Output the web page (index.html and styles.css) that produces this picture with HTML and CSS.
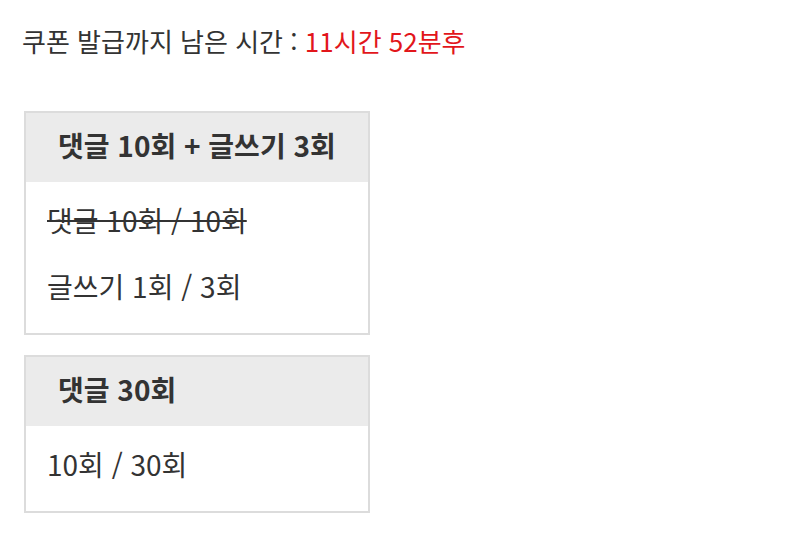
FILE: index.html
```html
<!DOCTYPE html>
<html lang="ko">
<head>
<meta charset="utf-8">
<link rel="stylesheet" href="styles.css">
</head>
<body>
<div class="page">
  <p class="timer">쿠폰 발급까지 남은 시간 : <span class="remain">11시간 52분후</span></p>
  <div class="mission">
    <div class="mission-head">댓글 10회 + 글쓰기 3회</div>
    <div class="mission-body">
      <div class="item done">댓글 10회 / 10회</div>
      <div class="item">글쓰기 1회 / 3회</div>
    </div>
  </div>
  <div class="mission">
    <div class="mission-head">댓글 30회</div>
    <div class="mission-body">
      <div class="item">10회 / 30회</div>
    </div>
  </div>
</div>
</body>
</html>
```

FILE: styles.css
```css
html, body {
  margin: 0;
  padding: 0;
  background: #fff;
}
body {
  font-family: "Noto Sans CJK KR", "Noto Sans", sans-serif;
  color: #333;
}
.page {
  padding: 21px 0 0 22px;
  display: flex;
  flex-direction: column;
  align-items: flex-start;
}
.timer {
  margin: 0;
  font-size: 26px;
  line-height: 40px;
  color: #333;
}
.remain {
  color: #e2161b;
}
.mission {
  width: 342px;
  border: 2px solid #dcdcdc;
  margin-left: 2px;
  margin-top: 20px;
  background: #fff;
}
.mission:first-of-type {
  margin-top: 50px;
}
.mission-head {
  box-sizing: border-box;
  background: #ebebeb;
  height: 69px;
  display: flex;
  align-items: center;
  padding: 0 0 6px 32px;
  font-size: 28px;
  font-weight: 700;
  color: #333;
}
.mission-body {
  padding: 7px 21px 12px;
}
.item {
  box-sizing: border-box;
  height: 66px;
  display: flex;
  align-items: center;
  padding-bottom: 4px;
  font-size: 28px;
  color: #333;
}
.item.done {
  text-decoration: line-through;
  text-decoration-thickness: 2px;
}
```
